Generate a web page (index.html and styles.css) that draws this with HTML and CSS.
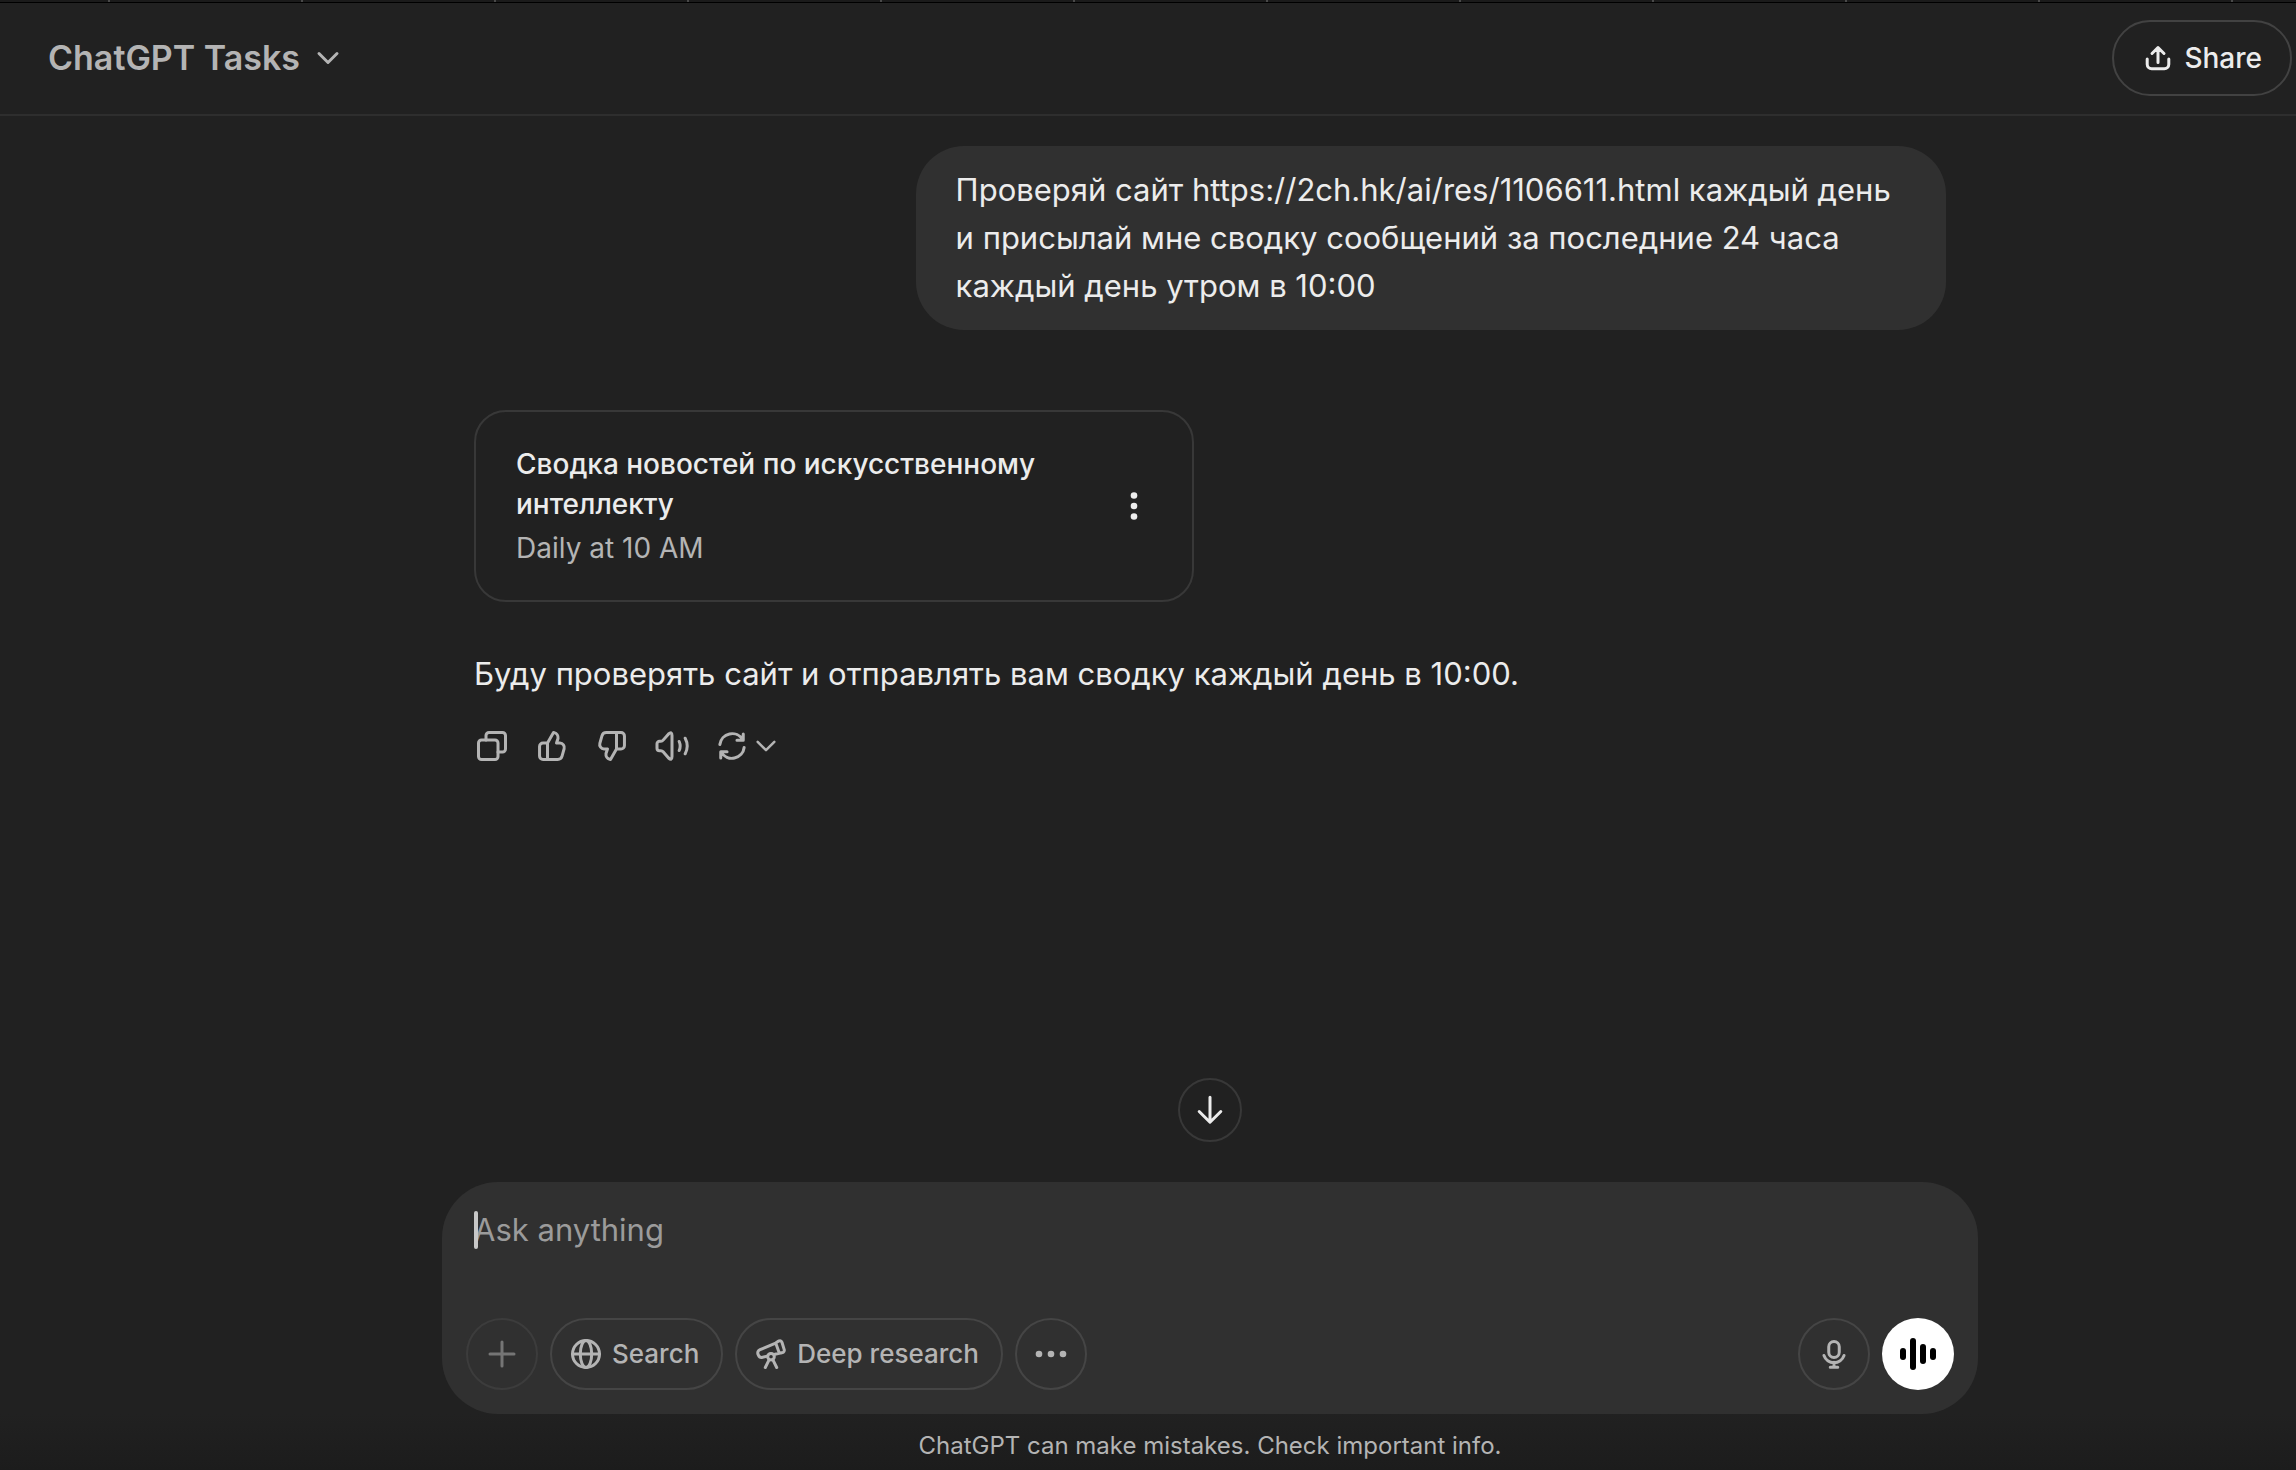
FILE: index.html
```html
<!DOCTYPE html>
<html lang="ru">
<head>
  <meta charset="UTF-8" />
  <meta name="viewport" content="width=device-width, initial-scale=1.0" />
  <title>ChatGPT Tasks</title>
  <link rel="stylesheet" href="styles.css">
</head>
<body>
  <div class="tabs">
    <span class="tab first"></span>
    <span class="tab"></span>
    <span class="tab"></span>
    <span class="tab"></span>
    <span class="tab"></span>
    <span class="tab"></span>
    <span class="tab"></span>
    <span class="tab"></span>
    <span class="tab"></span>
    <span class="tab"></span>
    <span class="tab"></span>
    <span class="tab"></span>
  </div>

  <header class="header">
    <button type="button" class="model">
      ChatGPT Tasks
      <svg class="chevron" viewBox="0 0 24 16"><path d="M3 3.500l9 9 9-9" /></svg>
    </button>
    <button type="button" class="share">
      <svg class="icon-share" viewBox="0 0 32 32"><path d="M16 20.500V5.500M10 11.500l6-6 6 6M5.200 17v5.300a4.500 4.500 0 0 0 4.500 4.500h12.600a4.500 4.500 0 0 0 4.500-4.500V17" /></svg>
      Share
    </button>
  </header>

  <main class="thread">
    <div class="column">
      <div class="bubble">Проверяй сайт https://2ch.hk/ai/res/1106611.html каждый день и присылай мне сводку сообщений за последние 24 часа каждый день утром в 10:00</div>

      <section class="task">
        <div class="task-text">
          <h2>Сводка новостей по искусственному интеллекту</h2>
          <p>Daily at 10 AM</p>
        </div>
        <button type="button" class="task-menu" aria-label="Task menu">
          <svg class="icon fill" viewBox="0 0 24 24"><circle cx="12" cy="5" r="2.200" /><circle cx="12" cy="12" r="2.200" /><circle cx="12" cy="19" r="2.200" /></svg>
        </button>
      </section>

      <p class="answer">Буду проверять сайт и отправлять вам сводку каждый день в 10:00.</p>

      <div class="actions">
        <button type="button" aria-label="Copy">
          <svg class="icon" viewBox="0 0 24 24"><rect x="3" y="8" width="13" height="13" rx="2" /><path d="M8 8V5a2 2 0 0 1 2-2h9a2 2 0 0 1 2 2v9a2 2 0 0 1-2 2h-3" /></svg>
        </button>
        <button type="button" aria-label="Good response">
          <svg class="icon" viewBox="0 0 24 24"><path d="M9 21V10.500a2 2 0 0 1 .3-1L13 3l.5.1A3.500 3.500 0 0 1 16 7l-1 3h2.300a3 3 0 0 1 2.800 3.800l-1.400 5A3 3 0 0 1 15.800 21H6a2.300 2.300 0 0 1-2.300-2.300V12.300A2.300 2.300 0 0 1 6 10h3" /></svg>
        </button>
        <button type="button" aria-label="Bad response">
          <svg class="icon flip" viewBox="0 0 24 24"><path d="M9 21V10.500a2 2 0 0 1 .3-1L13 3l.5.1A3.500 3.500 0 0 1 16 7l-1 3h2.300a3 3 0 0 1 2.800 3.800l-1.400 5A3 3 0 0 1 15.800 21H6a2.300 2.300 0 0 1-2.300-2.300V12.300A2.300 2.300 0 0 1 6 10h3" /></svg>
        </button>
        <button type="button" aria-label="Read aloud">
          <svg class="icon" viewBox="0 0 24 24"><path d="M2 10.500A1.700 1.700 0 0 1 3.700 8.800H4.500a2 2 0 0 0 1.600-.7L9.700 4Q12 2 12 5v14q0 3-2.300 1L6.100 15.900a2 2 0 0 0-1.600-.7H3.700A1.700 1.700 0 0 1 2 13.500ZM16.800 9q1.300 3 0 6M20.800 6.800q2.700 5.200 0 10.400" /></svg>
        </button>
        <button type="button" class="retry" aria-label="Try again">
          <svg class="icon" viewBox="0 0 24 24"><path d="M3.900 11a8.200 8.200 0 0 1 15.200-3.200M19.500 4v4.200h-4.200M20.100 13a8.200 8.200 0 0 1-15.200 3.200M4.500 20v-4.200h4.200" /></svg>
          <svg class="chevron small" viewBox="0 0 24 16"><path d="M2 3l10 10 10-10" /></svg>
        </button>
      </div>
    </div>
  </main>

  <footer class="bottom">
    <button type="button" class="scroll-down" aria-label="Scroll to bottom">
      <svg class="icon" viewBox="0 0 24 24"><path d="M12 3.500v16.500M4.800 13l7.200 7.200 7.200-7.200" /></svg>
    </button>

    <form class="composer">
      <div class="prompt">
        <textarea rows="2" placeholder="Ask anything" aria-label="Ask anything"></textarea>
        <span class="caret"></span>
      </div>
      <div class="tools">
        <button type="button" class="tool round disabled" aria-label="Add">
          <svg class="icon" viewBox="0 0 24 24"><path d="M12 4v16M4 12h16" /></svg>
        </button>
        <button type="button" class="tool">
          <svg class="icon" viewBox="0 0 24 24"><circle cx="12" cy="12" r="9" /><ellipse cx="12" cy="12" rx="3.800" ry="9" /><path d="M3 12h18" /></svg>
          Search
        </button>
        <button type="button" class="tool">
          <svg class="icon" viewBox="0 0 24 24"><path d="M15.500 4.600L4.700 9.100a2.400 2.400 0 0 0-1.400 3l.3.700a2.400 2.400 0 0 0 2.800 1.400l3.200-.8M14.600 12.200l3.700-.8M17.400 3.300a1.500 1.500 0 0 1 1.900.9l1.500 4.900a1.500 1.500 0 0 1-1 1.900l-.8.2a1.500 1.500 0 0 1-1.900-1l-1.600-4.500a1.500 1.500 0 0 1 .9-1.900ZM10.800 15.800L8.200 21M13.200 15.800L15.800 21" /><circle cx="12" cy="13.800" r="2.200" /></svg>
          Deep research
        </button>
        <button type="button" class="tool round" aria-label="More">
          <svg class="icon fill" viewBox="0 0 24 24"><circle cx="4" cy="12" r="2.200" /><circle cx="12" cy="12" r="2.200" /><circle cx="20" cy="12" r="2.200" /></svg>
        </button>
        <button type="button" class="tool round mic" aria-label="Dictate">
          <svg class="icon" viewBox="0 0 24 24"><rect x="8.500" y="3.700" width="7" height="10.600" rx="3.500" /><path d="M5.300 13a7.100 7.100 0 0 0 13.400 0M12 17.500V20.500M9.500 20.800h5" /></svg>
        </button>
        <button type="button" class="tool round voice" aria-label="Voice mode">
          <svg class="icon fill" viewBox="0 0 36 36"><rect y="12" width="6" height="12" rx="3" /><rect x="10" y="2" width="6" height="32" rx="3" /><rect x="20" y="8" width="6" height="20" rx="3" /><rect x="30" y="12" width="6" height="12" rx="3" /></svg>
        </button>
      </div>
    </form>

    <p class="note">ChatGPT can make mistakes. Check important info.</p>
  </footer>
</body>
</html>
```
FILE: styles.css
```css
* {
  box-sizing: border-box;
}
body {
  margin: 0;
  min-height: 100vh;
  display: flex;
  flex-direction: column;
  background: #212121;
  color: #ececec;
  font-family: Inter, "Noto Sans", sans-serif;
  font-size: 31px;
  line-height: 48px;
}
h2, p {
  margin: 0;
}
button {
  display: flex;
  align-items: center;
  justify-content: center;
  padding: 0;
  border: none;
  background: none;
  color: inherit;
  font: inherit;
  white-space: nowrap;
  cursor: pointer;
}

/* icons */
svg {
  display: block;
  flex: none;
  fill: none;
  stroke: currentColor;
  stroke-width: 2;
  stroke-linecap: round;
  stroke-linejoin: round;
}
.icon {
  width: 36px;
  height: 36px;
}
.icon.fill {
  fill: currentColor;
  stroke: none;
}
.icon.flip {
  transform: rotate(180deg);
}
.icon-share {
  width: 32px;
  height: 32px;
  stroke-width: 3;
}
.chevron {
  width: 24px;
  height: 16px;
  stroke-width: 3;
}
.chevron.small {
  width: 20px;
}

/* edge of the browser tabs */
.tabs {
  display: flex;
  height: 3px;
  overflow: hidden;
  background: #1b1b1b;
  border-bottom: 1px solid #000;
}
.tab {
  flex: 0 0 193px;
  border-right: 2px solid #4a4a4a;
}
.tab.first {
  flex-basis: 110px;
}

.header {
  display: flex;
  align-items: center;
  justify-content: space-between;
  height: 113px;
  padding: 0 4px 1px 48px;
  border-bottom: 2px solid #2e2e2e;
}
.model {
  gap: 16px;
  color: #b4b4b4;
  font-size: 34px;
  font-weight: 600;
}
.share {
  gap: 10px;
  height: 76px;
  padding: 0 28px;
  border: 2px solid #424242;
  border-radius: 38px;
  font-size: 28px;
  font-weight: 500;
}

.thread {
  flex: 1;
  padding: 30px 0 0 124px;
}
.column {
  display: flex;
  flex-direction: column;
  align-items: flex-start;
  max-width: 1472px;
  margin: 0 auto;
}
.bubble {
  align-self: flex-end;
  width: 70%;
  padding: 20px 40px;
  border-radius: 48px;
  background: #303030;
}

.task {
  display: flex;
  align-items: center;
  justify-content: space-between;
  width: 720px;
  margin-top: 80px;
  padding: 32px 40px;
  border: 2px solid #383838;
  border-radius: 32px;
  font-size: 28px;
  line-height: 40px;
}
.task-text {
  width: 540px;
}
.task h2 {
  margin-bottom: 4px;
  font-size: 28px;
  font-weight: 500;
}
.task p {
  color: #b4b4b4;
}
.answer {
  margin-top: 44px;
  line-height: 56px;
}
.actions {
  display: flex;
  margin: 14px 0 0 -12px;
  color: #b4b4b4;
}
.actions button {
  height: 60px;
  padding: 0 12px;
}
.retry {
  gap: 6px;
}

.bottom {
  display: flex;
  flex-direction: column;
  align-items: center;
  padding-left: 124px;
  background: linear-gradient(to top, #1c1c1c, #212121 56px);
}
.scroll-down {
  width: 64px;
  height: 64px;
  margin-bottom: 40px;
  border: 2px solid #383838;
  border-radius: 50%;
}
.composer {
  width: 100%;
  max-width: 1536px;
  padding: 24px;
  border-radius: 56px;
  background: #303030;
}
.prompt {
  position: relative;
  margin-bottom: 16px;
  padding: 0 8px;
}
textarea {
  display: block;
  width: 100%;
  height: 96px;
  padding: 0;
  border: none;
  outline: none;
  resize: none;
  background: none;
  color: #ececec;
  font: inherit;
}
textarea::placeholder {
  color: #9b9b9b;
}
.caret {
  position: absolute;
  left: 8px;
  top: 5px;
  width: 4px;
  height: 38px;
  border-radius: 2px;
  background: #c8c8c8;
}
.tools {
  display: flex;
  gap: 12px;
  color: #b4b4b4;
}
.tool {
  gap: 8px;
  height: 72px;
  padding: 0 22px 0 16px;
  border: 2px solid #454545;
  border-radius: 36px;
  font-size: 26px;
  font-weight: 500;
}
.round {
  width: 72px;
  padding: 0;
}
.disabled {
  border-color: #3c3c3c;
  color: #757575;
}
.mic {
  margin-left: auto;
}
.voice {
  border: none;
  background: #fff;
  color: #000;
}
.note {
  padding: 16px 0 8px;
  color: #b4b4b4;
  font-size: 24px;
  line-height: 32px;
}
```
